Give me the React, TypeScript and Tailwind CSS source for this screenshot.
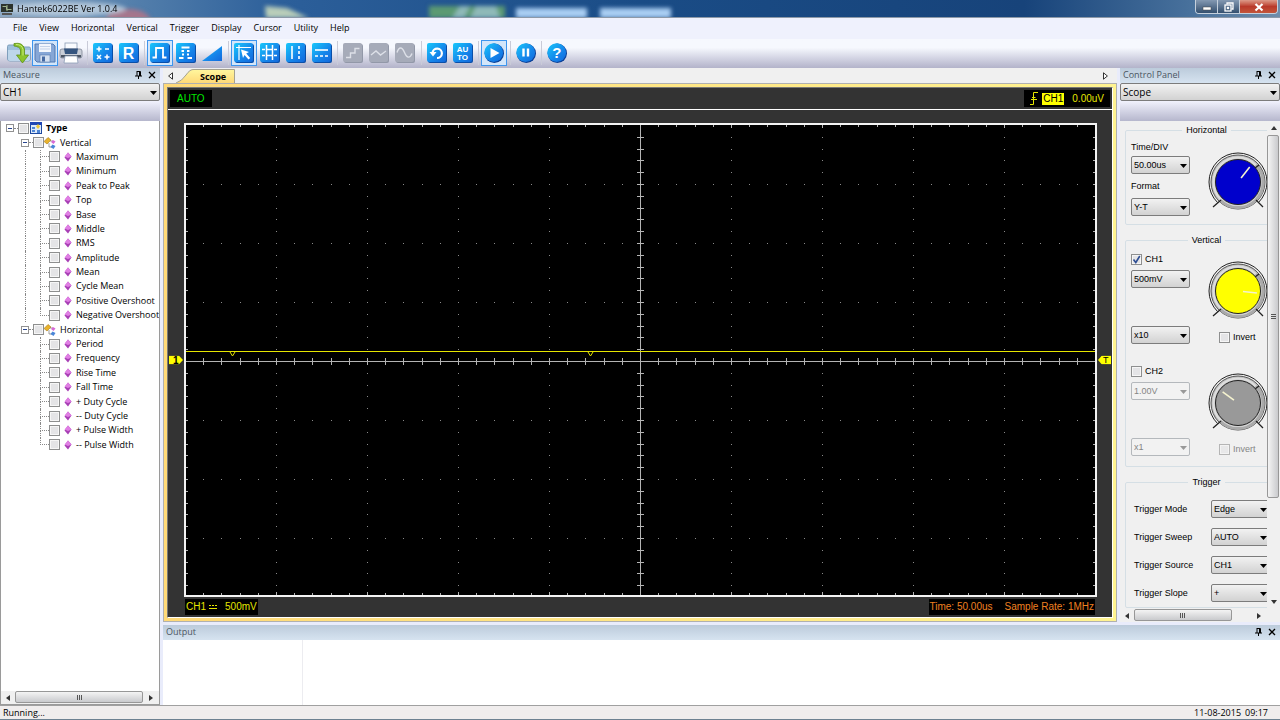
import { useState } from "react";
import type { ReactNode } from "react";
import clsx from "clsx";

const MENUS = ["File", "View", "Horizontal", "Vertical", "Trigger", "Display", "Cursor", "Utility", "Help"];

const VERTICAL_ITEMS = [
  "Maximum",
  "Minimum",
  "Peak to Peak",
  "Top",
  "Base",
  "Middle",
  "RMS",
  "Amplitude",
  "Mean",
  "Cycle Mean",
  "Positive Overshoot",
  "Negative Overshoot",
];

const HORIZONTAL_ITEMS = [
  "Period",
  "Frequency",
  "Rise Time",
  "Fall Time",
  "+ Duty Cycle",
  "-- Duty Cycle",
  "+ Pulse Width",
  "-- Pulse Width",
];

const TRIGGER_ROWS = [
  { label: "Trigger Mode", value: "Edge" },
  { label: "Trigger Sweep", value: "AUTO" },
  { label: "Trigger Source", value: "CH1" },
  { label: "Trigger Slope", value: "+" },
];

/* ---------- toolbar ---------- */

function Tile({ children, off }: { children: ReactNode; off?: boolean }) {
  return (
    <svg viewBox="0 0 20 20" className="h-5 w-5" fill="none">
      <rect x="1" y="1" width="19" height="19" rx="2" fill={off ? "#9298a8" : "#0a4fa8"} />
      <rect width="19" height="19" rx="2" fill={off ? "#a6abb9" : "url(#tile)"} />
      {children}
    </svg>
  );
}

function Disc({ children }: { children: ReactNode }) {
  return (
    <svg viewBox="0 0 20 20" className="h-5 w-5" fill="none">
      <circle cx="10.3" cy="10.3" r="9.7" fill="#0a3f96" />
      <circle cx="9.7" cy="9.7" r="9.4" fill="url(#tile)" />
      {children}
    </svg>
  );
}

type Tool = { name: string; active?: boolean; off?: boolean; icon: ReactNode };

const TOOL_GROUPS: Tool[][] = [
  [
    {
      name: "Open",
      icon: (
        <svg viewBox="0 0 26 22" className="h-[22px] w-[26px]" fill="none">
          <path d="M1.500 4.500Q1.500 3 3 3h6l2 2h12q1.500 0 1.500 1.500V17q0 2-2 2H4q-2.500 0-2.500-2z" fill="#9fc0dc" stroke="#7f9fbc" />
          <path d="M2 8h22v9q0 2-2 2H4q-2 0-2-2z" fill="#bdd6ea" />
          <path d="M8 1.500q9-1.500 10.500 5.500v6h4L16.500 21 10.500 13h4V8q-.5-3.500-6.500-4z" fill="#8cc52c" stroke="#5d8f17" strokeWidth=".8" />
          <path d="M10 2.500q6 0 7 5v6" stroke="#c8ec7c" />
        </svg>
      ),
    },
    {
      name: "Save",
      active: true,
      icon: (
        <svg viewBox="0 0 22 22" className="h-[22px] w-[22px]" fill="none">
          <path d="M1 2h18l2 2v16H3l-2-2z" fill="#86a7d6" stroke="#5378b0" />
          <rect x="5" y="2" width="12" height="8" fill="#f2f6fc" />
          <path d="M6 4.500h10M6 7h10" stroke="#c3d2e8" />
          <rect x="6" y="13" width="10" height="7" fill="#d4e0f0" stroke="#5378b0" strokeWidth=".6" />
          <rect x="8" y="14.500" width="3" height="5" fill="#456aa3" />
        </svg>
      ),
    },
    {
      name: "Print",
      icon: (
        <svg viewBox="0 0 24 22" className="h-[22px] w-6" fill="none">
          <rect x="6" y="1" width="12" height="8" fill="#fafcff" stroke="#8b9cb5" strokeWidth=".8" />
          <rect x="1" y="7" width="22" height="9" rx="2" fill="#c9ced7" stroke="#7d8796" strokeWidth=".8" />
          <path d="M5 6.500h14l-1 5.500H6z" fill="#35557f" />
          <rect x="2" y="13" width="20" height="2.500" fill="#4c5666" />
          <path d="M6 14h12l1 7H5z" fill="#fff" stroke="#8b9cb5" strokeWidth=".8" />
        </svg>
      ),
    },
  ],
  [
    {
      name: "Math",
      icon: (
        <Tile>
          <path d="M3.500 6h5M6 3.500v5M12 6h4M4 12l4 4M8 12l-4 4M11.500 14h5M14 11.500v5" stroke="#fff" strokeWidth="1.500" />
        </Tile>
      ),
    },
    {
      name: "Reference",
      icon: (
        <Tile>
          <text x="9.500" y="15.500" textAnchor="middle" fontSize="16" fontWeight="700" fill="#fff" fontFamily="Liberation Sans, sans-serif">R</text>
        </Tile>
      ),
    },
  ],
  [
    {
      name: "Channel 1",
      active: true,
      icon: (
        <Tile>
          <path d="M2.500 14.500H6V5h7v9.500h3.500" stroke="#fff" strokeWidth="1.800" />
        </Tile>
      ),
    },
    {
      name: "Channel 2",
      icon: (
        <Tile>
          <path d="M3 15h4.500M11.500 15H16M5.500 4.500h8M5.500 8h2.500M11 8h2.500M6 11.500h2M11 11.500h2" stroke="#fff" strokeWidth="1.800" />
        </Tile>
      ),
    },
    {
      name: "Ramp",
      icon: (
        <svg viewBox="0 0 20 20" className="h-5 w-5">
          <path d="M0 18 20 3v15z" fill="url(#tile)" />
        </svg>
      ),
    },
  ],
  [
    {
      name: "Cursor cross",
      active: true,
      icon: (
        <Tile>
          <path d="M2 4.500h15M5 2v15" stroke="#fff" strokeWidth="1.200" />
          <path d="M7 6.500l8 2.500-2.800 1.500 4 4.500-1.700 1.500-4-4.500L9 15z" fill="#fff" />
        </Tile>
      ),
    },
    {
      name: "Cursor trace",
      icon: (
        <Tile>
          <path d="M2 6.500h3M6 6.500h7M14 6.500h3M2 12.500h3M6 12.500h7M14 12.500h3M6.500 2v15M12.500 2v15" stroke="#fff" strokeWidth="1.500" />
        </Tile>
      ),
    },
    {
      name: "Cursor vertical",
      icon: (
        <Tile>
          <path d="M6 3v13" stroke="#fff" strokeWidth="1.600" />
          <path d="M13 3v13" stroke="#fff" strokeWidth="1.600" strokeDasharray="3 2" />
        </Tile>
      ),
    },
    {
      name: "Cursor horizontal",
      icon: (
        <Tile>
          <path d="M3 7h13" stroke="#fff" strokeWidth="1.600" />
          <path d="M3 13h13" stroke="#fff" strokeWidth="1.600" strokeDasharray="3 2" />
        </Tile>
      ),
    },
  ],
  [
    {
      name: "Step",
      off: true,
      icon: (
        <Tile off>
          <path d="M3 14.500h4.500V10H12V5.500h4.500" stroke="#dde0e8" strokeWidth="1.400" />
        </Tile>
      ),
    },
    {
      name: "Linear",
      off: true,
      icon: (
        <Tile off>
          <path d="M2 12l5-4 4.500 4L17 8" stroke="#dde0e8" strokeWidth="1.400" />
        </Tile>
      ),
    },
    {
      name: "Sine",
      off: true,
      icon: (
        <Tile off>
          <path d="M2 9.500c2-6 5-6 7.500 0s5.500 6 7.500 1" stroke="#dde0e8" strokeWidth="1.400" />
        </Tile>
      ),
    },
  ],
  [
    {
      name: "Reset",
      icon: (
        <Tile>
          <path d="M5.500 10a4.700 4.700 0 1 1 4.500 5" stroke="#fff" strokeWidth="2.200" />
          <path d="M2.500 9h7L6 13.500z" fill="#fff" />
        </Tile>
      ),
    },
    {
      name: "Auto set",
      icon: (
        <Tile>
          <g fill="#fff" fontSize="8" fontWeight="700" textAnchor="middle" fontFamily="Liberation Sans, sans-serif">
            <text x="9.500" y="9">AU</text>
            <text x="9.500" y="17">TO</text>
          </g>
        </Tile>
      ),
    },
  ],
  [
    {
      name: "Run",
      active: true,
      icon: (
        <Disc>
          <path d="M6.500 5v10l9-5z" fill="#fff" />
        </Disc>
      ),
    },
  ],
  [
    {
      name: "Pause",
      icon: (
        <Disc>
          <path d="M7.500 5.500v8M12 5.500v8" stroke="#fff" strokeWidth="2.400" />
        </Disc>
      ),
    },
  ],
  [
    {
      name: "Help",
      icon: (
        <Disc>
          <text x="9.800" y="15" textAnchor="middle" fontSize="15" fontWeight="700" fill="#fff" fontFamily="Liberation Sans, sans-serif">?</text>
        </Disc>
      ),
    },
  ],
];

function Toolbar() {
  return (
    <div className="flex h-[29px] shrink-0 items-center bg-linear-to-b from-[#f6f8fe] from-30% to-[#b3b3ca] pb-0.5 pl-[6px]">
      {TOOL_GROUPS.map((group, i) => (
        <div key={i} className="flex items-center">
          {i > 0 && (
            <span className={clsx("flex justify-center", i % 2 ? "w-[6px]" : "w-[5px]")}>
              <span className="h-6 w-px bg-[#c9cbd8]" />
            </span>
          )}
          {group.map((t) => (
            <button
              key={t.name}
              aria-label={t.name}
              disabled={t.off}
              className={clsx(
                "flex h-[26px] w-[26px] items-center justify-center",
                t.active && "border border-[#3d95ee] bg-[#d3e6fa]",
              )}
            >
              {t.icon}
            </button>
          ))}
        </div>
      ))}
    </div>
  );
}

/* ---------- title bar ---------- */

function TitleBar() {
  return (
    <header className="relative flex h-[17px] shrink-0 items-center overflow-hidden bg-[#1d4f88]">
      <svg viewBox="0 0 1280 17" preserveAspectRatio="none" className="absolute inset-0 h-full w-full">
        <rect width="1280" height="17" fill="url(#sky)" />
        <g filter="url(#soft)">
          <ellipse cx="128" cy="20" rx="22" ry="11" fill="#a5768c" />
          <ellipse cx="66" cy="9" rx="60" ry="7" fill="#c3d3e2" opacity=".8" />
          <path d="M265 6l22 2 22 10h-43z" fill="#b9cdb9" />
          <path d="M429 6h76v12h-76z" fill="#5b9a72" />
          <path d="M452 18l8-12h10l-6 12zM476 6h20l4 12h-30z" fill="#8fb9b8" />
          <path d="M516 8h71v10h-71zM600 8h71v10h-71z" fill="#a9cdf2" />
        </g>
      </svg>
      <svg viewBox="0 0 12 12" className="relative ml-px h-3 w-3">
        <rect y="1" width="12" height="8" fill="#2c332c" />
        <path d="M1.500 3.500h4v3h5M6 2v6" stroke="#a0b58c" fill="none" />
        <path d="M1 11h10" stroke="#555" strokeWidth="2" />
      </svg>
      <h1 className="relative ml-1 flex-1 text-[9px] leading-4 text-black">Hantek6022BE Ver 1.0.4</h1>
      <div className="relative mr-0.5 flex h-[14px] self-start overflow-hidden rounded-b border border-t-0 border-[#c5d0dc]">
        <button aria-label="Minimize" className="flex w-[22px] items-center justify-center border-r border-[#c5d0dc] bg-linear-to-b from-[#8499b2] to-[#34506f]">
          <svg viewBox="0 0 10 10" className="h-[10px] w-[10px]"><rect x="1" y="5" width="8" height="3" fill="#fff" stroke="#444" strokeWidth=".5" /></svg>
        </button>
        <button aria-label="Restore" className="flex w-[22px] items-center justify-center border-r border-[#c5d0dc] bg-linear-to-b from-[#8499b2] to-[#34506f]">
          <svg viewBox="0 0 10 10" className="h-[10px] w-[10px]" fill="none" stroke="#fff" strokeWidth="1.300">
            <path d="M3 2.500V1h6v6H7.500" />
            <rect x="1" y="3" width="6" height="6" />
            <rect x="3.500" y="5.500" width="1" height="1" />
          </svg>
        </button>
        <button aria-label="Close" className="flex w-[37px] items-center justify-center bg-linear-to-b from-[#dc9a8a] via-[#b9392a] to-[#c3553a]">
          <svg viewBox="0 0 10 10" className="h-[10px] w-[10px]"><path d="M1.500 2l7 6.500M8.500 2l-7 6.500" stroke="#fff" strokeWidth="2.200" /></svg>
        </button>
      </div>
    </header>
  );
}

/* ---------- shared bits ---------- */

function PanelHeader({ title }: { title: string }) {
  return (
    <div className="flex h-[15px] shrink-0 items-center bg-linear-to-b from-[#bccbdb] to-[#d6e3f0] pr-1 pb-px pl-[3px]">
      <h2 className="flex-1 text-[9px] leading-3 text-[#4a5561]">{title}</h2>
      <button aria-label={`Pin ${title}`} className="mr-1.5">
        <svg viewBox="0 0 7 8" className="h-2 w-[7px]" fill="none" stroke="#000">
          <path d="M2 .5h3.500V5M2 0v5M0 5h7M3.500 5v3M4.500 0v5" />
        </svg>
      </button>
      <button aria-label={`Close ${title}`}>
        <svg viewBox="0 0 8 8" className="h-2 w-2"><path d="M1 1l6 6M7 1L1 7" stroke="#000" strokeWidth="1.300" /></svg>
      </button>
    </div>
  );
}

function Combo({ label, value, disabled, className }: { label: string; value: string; disabled?: boolean; className?: string }) {
  return (
    <div className={clsx("relative h-[18px]", className)}>
      <select
        aria-label={label}
        disabled={disabled}
        defaultValue={value}
        className={clsx(
          "h-full w-full appearance-none rounded-xs border pr-3 pl-0.5 leading-3",
          disabled
            ? "border-[#b4b8bc] bg-[#f2f2f2] text-[#858585]"
            : "border-[#7c7c7c] bg-linear-to-b from-[#f2f2f2] to-[#d2d2d2] text-black",
        )}
      >
        <option>{value}</option>
      </select>
      <svg viewBox="0 0 7 4" className={clsx("pointer-events-none absolute top-[8px] right-[3px] h-1 w-[7px]", disabled ? "fill-[#999]" : "fill-black")}>
        <path d="M0 0h7L3.500 4z" />
      </svg>
    </div>
  );
}

const CHECKBOX =
  "h-[11px] w-[11px] shrink-0 appearance-none border border-[#8e8f8f] bg-[#e4e4e6] bg-clip-padding shadow-[inset_0_0_0_1px_#f6f6f6]";

function Check({ label, checked, disabled }: { label: string; checked?: boolean; disabled?: boolean }) {
  const [on, setOn] = useState(!!checked);
  return (
    <label className={clsx("flex h-3 items-center gap-[3px] leading-3", disabled && "text-[#858585]")}>
      <span className="relative flex">
        <input type="checkbox" checked={on} disabled={disabled} onChange={() => setOn(!on)} className={clsx(CHECKBOX, disabled && "opacity-60")} />
        {on && (
          <svg viewBox="0 0 11 11" className="pointer-events-none absolute inset-0 h-[11px] w-[11px]">
            <path d="M2.500 5.500l2.300 3 4-6.500" stroke="#2f4f94" strokeWidth="1.600" fill="none" />
          </svg>
        )}
      </span>
      {label}
    </label>
  );
}

function HScroll({ thumb }: { thumb: string }) {
  return (
    <div className="flex h-[13px] shrink-0 items-center bg-[#f0f0f0]">
      <button aria-label="Scroll left" className="flex w-[14px] justify-center">
        <svg viewBox="0 0 4 6" className="h-1.5 w-1"><path d="M4 0v6L0 3z" fill="#333" /></svg>
      </button>
      <div className="h-full flex-1">
        <div className={clsx("flex h-3 items-center justify-center gap-px rounded-xs border border-[#979797] bg-linear-to-b from-[#f4f4f4] to-[#c9cacd]", thumb)}>
          <i className="h-[5px] w-px bg-[#555]" />
          <i className="h-[5px] w-px bg-[#555]" />
          <i className="h-[5px] w-px bg-[#555]" />
        </div>
      </div>
      <button aria-label="Scroll right" className="flex w-4 justify-center">
        <svg viewBox="0 0 4 6" className="h-1.5 w-1"><path d="M0 0v6l4-3z" fill="#333" /></svg>
      </button>
    </div>
  );
}

/* ---------- measure panel ---------- */

function Expander() {
  return (
    <button aria-label="Collapse" className="flex h-2 w-2 shrink-0 items-center justify-center border border-[#919191] bg-white">
      <i className="h-px w-1 bg-[#28458f]" />
    </button>
  );
}

function ClassIcon() {
  return (
    <svg viewBox="0 0 12 12" className="h-3 w-3 shrink-0">
      <path d="M0 4.500L4 .5l3 2.500-4 4z" fill="#e9b32c" stroke="#a87a14" strokeWidth=".6" />
      <path d="M6 4h3M5 6v4h3" stroke="#777" fill="none" strokeWidth=".7" />
      <path d="M7 5l2-2 2.500 1.500-2 2.500z" fill="#d769d6" />
      <path d="M6.500 10l2-2.500 3 1.500-2 3z" fill="#4a86d8" />
    </svg>
  );
}

function Leaf({ label, trunk, last }: { label: string; trunk?: boolean; last?: boolean }) {
  return (
    <li>
      <label className="flex h-full items-center pl-6">
        <span className={clsx("h-full w-[15px] border-l border-dotted", trunk ? "border-[#888]" : "border-transparent")} />
        <span className="flex h-full w-[9px] flex-col">
          <span className="flex-1 border-b border-l border-dotted border-[#888]" />
          <span className={clsx("flex-1 border-l border-dotted", last ? "border-transparent" : "border-[#888]")} />
        </span>
        <input type="checkbox" className={CHECKBOX} />
        <svg viewBox="0 0 8 10" className="mr-1 ml-1 h-[10px] w-2 shrink-0">
          <path d="M4 .5l3.500 4L4 9.500.5 5.500z" fill="#a83fb5" />
          <path d="M4 .5l3.500 4L4 6 .5 4.500z" fill="#e07fe4" />
        </svg>
        {label}
      </label>
    </li>
  );
}

function Branch({ label }: { label: string }) {
  return (
    <li className="flex items-center pl-5">
      <Expander />
      <span className="w-[4px] border-t border-dotted border-[#888]" />
      <label className="flex items-center">
        <input type="checkbox" className={CHECKBOX} />
        <ClassIcon />
        <span className="ml-1">{label}</span>
      </label>
    </li>
  );
}

function MeasurePanel() {
  return (
    <aside className="flex w-[160px] shrink-0 flex-col">
      <PanelHeader title="Measure" />
      <Combo label="Measure channel" value="CH1" className="shrink-0 text-[10px]" />
      <div className="h-[20px] shrink-0 bg-linear-to-b from-[#f1f2fd] to-[#b6b7cd]" />
      <div className="flex min-h-0 flex-1 flex-col border border-t-0 border-[#9a9a9a] bg-white">
        <div className="min-h-0 flex-1 overflow-hidden">
          <ul className="grid h-[331px] auto-rows-fr text-[9px] leading-[14px] whitespace-nowrap">
            <li className="flex items-center pl-[5px]">
              <Expander />
              <span className="w-[4px] border-t border-dotted border-[#888]" />
              <label className="flex items-center font-bold">
                <input type="checkbox" className={CHECKBOX} />
                <svg viewBox="0 0 12 12" className="ml-px h-3 w-3">
                  <rect x=".5" y=".5" width="11" height="11" fill="#dce9fa" stroke="#1d49a0" />
                  <rect width="12" height="3" fill="#1f46b4" />
                  <path d="M2 5h3v2H2zM2 8h3v2H2zM7 8h3v3H7z" fill="#4f86d4" />
                  <path d="M8 2l2 2.500L8 7 6 4.500z" fill="#f0c93a" />
                </svg>
                <span className="ml-1">Type</span>
              </label>
            </li>
            <Branch label="Vertical" />
            {VERTICAL_ITEMS.map((v, i) => (
              <Leaf key={v} label={v} trunk last={i === VERTICAL_ITEMS.length - 1} />
            ))}
            <Branch label="Horizontal" />
            {HORIZONTAL_ITEMS.map((v, i) => (
              <Leaf key={v} label={v} last={i === HORIZONTAL_ITEMS.length - 1} />
            ))}
          </ul>
        </div>
        <HScroll thumb="w-full" />
      </div>
    </aside>
  );
}

/* ---------- scope ---------- */

const W = 909;
const H = 470;
const CX = 454;
const CY = 236;

function gridPaths() {
  let dots = "";
  let ticks = "";
  for (let k = -4; k <= 4; k++) {
    if (k === 0) continue;
    for (let j = -19; j <= 19; j++) dots += `M${CX + k * 91} ${Math.round(CY + j * 11.8)}.5h1`;
  }
  for (let k = -3; k <= 3; k++) {
    if (k === 0) continue;
    for (let j = -24; j <= 24; j++) dots += `M${Math.round(CX + j * 18.2)} ${CY + k * 59}.5h1`;
  }
  for (let j = -24; j <= 24; j++) {
    const x = Math.round(CX + j * 18.2);
    const edge = j % 5 === 0 ? 3 : 2;
    ticks += `M${x}.5 ${CY - 3}v7M${x}.5 0v${edge}M${x}.5 ${H}v-${edge}`;
  }
  for (let j = -19; j <= 19; j++) {
    const y = Math.round(CY + j * 11.8);
    ticks += `M${CX - 3} ${y}.5h7M0 ${y}.5h2M${W} ${y}.5h-2`;
  }
  return { dots, ticks };
}

function Graticule() {
  const { dots, ticks } = gridPaths();
  return (
    <svg viewBox={`0 0 ${W} ${H}`} preserveAspectRatio="none" className="block h-full w-full bg-black" fill="none" shapeRendering="crispEdges">
      <path d={dots} stroke="#8a8a8a" />
      <path d={ticks} stroke="#b4b4b4" />
      <path d={`M0 ${CY}.5H${W}M${CX}.5 0V${H}`} stroke="#b4b4b4" />
      <path d={`M0 226.5H${W}`} stroke="#e6e600" />
      <path d="M44 227l2.500 4 2.500-4M402 227l2.500 4 2.500-4" stroke="#e6e600" shapeRendering="auto" />
    </svg>
  );
}

function ScopeView() {
  return (
    <main className="flex min-w-0 flex-1 flex-col">
      <div className="flex h-[15px] shrink-0 items-end bg-[#f0f0f0] pr-[9px] pl-[5px]">
        <button aria-label="Previous tab" className="self-center">
          <svg viewBox="0 0 5 8" className="h-2 w-[5px]" fill="#fff" stroke="#000" strokeWidth=".8"><path d="M4.500 .8v6.400L.6 4z" /></svg>
        </button>
        <button className="relative h-[14px] w-[62px] pl-[27px] text-left text-[9px] leading-[13px] font-bold text-black">
          <svg viewBox="0 0 62 14" preserveAspectRatio="none" className="absolute inset-0 h-full w-full">
            <path d="M3 14Q9 12 13 6T21 .5H61.500V14" fill="url(#tab)" stroke="#a5a18e" />
          </svg>
          <span className="relative">Scope</span>
        </button>
        <span className="flex-1" />
        <button aria-label="Next tab" className="self-center">
          <svg viewBox="0 0 5 8" className="h-2 w-[5px]" fill="#fff" stroke="#000" strokeWidth=".8"><path d="M.5 .8v6.400L4.400 4z" /></svg>
        </button>
      </div>
      <div className="flex min-h-0 flex-1 flex-col border border-[#b0b0b0] bg-linear-to-r from-[#ffd978] to-[#fff391] p-[3px]">
        <div className="flex min-h-0 flex-1 flex-col border border-t-[#777] border-r-white border-b-white border-l-[#777] bg-[#333] font-['Liberation_Sans',sans-serif] text-[10px] leading-4">
          <div className="flex h-[22px] shrink-0 items-center justify-between border-b border-white px-[2px]">
            <span className="bg-black px-[7px] leading-[17px] text-[#00e600]">AUTO</span>
            <span className="flex items-center bg-black px-[6px] leading-[17px] text-[#e6e600]">
              <svg viewBox="0 0 8 13" className="mr-1 h-[13px] w-2" fill="none" stroke="#e6e600"><path d="M0 12.500h3.500V.5H8M1 7.500h6M2 5.500h3.500" /></svg>
              <span className="mr-2 bg-[#ffff00] px-px leading-3 text-black">CH1</span>
              0.00uV
            </span>
          </div>
          <div className="relative mt-[13px] min-h-0 flex-1 pr-[15px] pl-4">
            <div className="h-full border-2 border-[#f4f4f4]">
              <Graticule />
            </div>
            <span className="absolute top-1/2 left-px flex h-[9px] w-[14px] -translate-y-1/2 items-center bg-[#ffff00] pl-1 text-[10px] leading-[9px] font-bold text-black [clip-path:polygon(0_0,70%_0,100%_50%,70%_100%,0_100%)]">
              1
            </span>
            <span className="absolute top-1/2 right-px flex h-[9px] w-[13px] -translate-y-1/2 items-center bg-[#ffff00] pl-[5px] text-[9px] leading-[9px] text-black [clip-path:polygon(30%_0,100%_0,100%_100%,30%_100%,0_50%)]">
              T
            </span>
          </div>
          <div className="flex h-[20px] shrink-0 items-center justify-between px-[17px]">
            <span className="flex items-center bg-black px-px text-[#e6e600]">
              CH1
              <svg viewBox="0 0 8 6" className="mr-2 ml-[3px] h-1.5 w-2" stroke="#e6e600"><path d="M0 1.500h8" strokeDasharray="2 1" /><path d="M0 4.500h8" /></svg>
              500mV
            </span>
            <span className="flex gap-3 bg-black px-px text-[#f08020]">
              <span>Time: 50.00us</span>
              <span>Sample Rate: 1MHz</span>
            </span>
          </div>
        </div>
      </div>
    </main>
  );
}

/* ---------- control panel ---------- */

function Knob({ color, angle }: { color: string; angle: number }) {
  return (
    <svg viewBox="0 0 62 62" className="h-[62px] w-[62px] shrink-0" fill="none">
      <circle cx="31" cy="31" r="27" fill="#c2c2c2" stroke="#555" />
      <circle cx="31" cy="31" r="24.500" stroke="#dedede" strokeWidth="2" />
      <path d="M49 14a25 25 0 0 1-36 35" stroke="#aaa" strokeWidth="3" />
      <path d="M10.500 51.500a29 29 0 1 1 41 0" stroke="#222" />
      <path d="M6 56l8-7M56 56l-7-7M48 17l4-3" stroke="#222" strokeWidth="1.300" />
      <circle cx="31" cy="31" r="22.500" fill={color} stroke="#222" />
      <path d="M36 31h14" stroke="#f5f3cf" strokeWidth="1.600" transform={`rotate(${angle} 31 31)`} />
    </svg>
  );
}

function Channel({ name, volts, probe, color, angle, on }: { name: string; volts: string; probe: string; color: string; angle: number; on?: boolean }) {
  return (
    <div className="flex">
      <div className="w-[59px] shrink-0">
        <Check label={name} checked={on} />
        <Combo label={`${name} volts`} value={volts} disabled={!on} className="mt-[5px]" />
        <Combo label={`${name} probe`} value={probe} disabled={!on} className="mt-[38px]" />
      </div>
      <div className="mt-[7px] ml-[17px] shrink-0">
        <Knob color={color} angle={angle} />
        <div className="mt-[9px] ml-3">
          <Check label="Invert" disabled={!on} />
        </div>
      </div>
    </div>
  );
}

function Group({ title, children }: { title: string; children: ReactNode }) {
  return (
    <fieldset className="ml-[5px] w-[163px] rounded-xs border border-[#d5dfe5] px-[5px]">
      <legend className="mx-auto h-3 px-1 leading-3">{title}</legend>
      {children}
    </fieldset>
  );
}

function ControlPanel() {
  return (
    <aside className="ml-[3px] flex w-[160px] shrink-0 flex-col">
      <PanelHeader title="Control Panel" />
      <Combo label="Control panel page" value="Scope" className="shrink-0 text-[10px]" />
      <div className="h-[20px] shrink-0 bg-linear-to-b from-[#f1f2fd] to-[#b6b7cd]" />
      <div className="flex min-h-0 flex-1 bg-[#f0f0f0]">
        <div className="flex min-w-0 flex-1 flex-col gap-[9px] overflow-hidden pt-[3px] font-['Liberation_Sans',sans-serif] text-[9px] leading-3">
          <Group title="Horizontal">
            <div className="flex pt-[5px] pb-2">
              <div className="w-[59px] shrink-0">
                <p>Time/DIV</p>
                <Combo label="Time/DIV" value="50.00us" className="mt-[3px]" />
                <p className="mt-1.5">Format</p>
                <Combo label="Format" value="Y-T" className="mt-1.5" />
              </div>
              <div className="mt-[10px] ml-[17px]">
                <Knob color="#0000cc" angle={-52} />
              </div>
            </div>
          </Group>
          <Group title="Vertical">
            <div className="flex flex-col gap-[21px] pt-[7px] pb-[10px]">
              <Channel name="CH1" volts="500mV" probe="x10" color="#ffff00" angle={6} on />
              <Channel name="CH2" volts="1.00V" probe="x1" color="#999999" angle={-144} />
            </div>
          </Group>
          <Group title="Trigger">
            <div className="pt-[7px] pl-[3px]">
              {TRIGGER_ROWS.map((r) => (
                <div key={r.label} className="flex h-7 items-center">
                  <span className="w-[77px] shrink-0">{r.label}</span>
                  <Combo label={r.label} value={r.value} className="w-[59px] shrink-0" />
                </div>
              ))}
            </div>
          </Group>
        </div>
        <div className="flex w-[13px] shrink-0 flex-col items-center">
          <button aria-label="Scroll up" className="flex h-[14px] items-center">
            <svg viewBox="0 0 6 4" className="h-1 w-1.5"><path d="M0 4h6L3 0z" fill="#333" /></svg>
          </button>
          <div className="w-full flex-1">
            <div className="flex h-[79%] w-3 flex-col items-center justify-center gap-px rounded-xs border border-[#979797] bg-linear-to-r from-[#f4f4f4] to-[#c9cacd]">
              <i className="h-px w-[5px] bg-[#555]" />
              <i className="h-px w-[5px] bg-[#555]" />
              <i className="h-px w-[5px] bg-[#555]" />
            </div>
          </div>
          <button aria-label="Scroll down" className="flex h-[14px] items-center">
            <svg viewBox="0 0 6 4" className="h-1 w-1.5"><path d="M0 0h6L3 4z" fill="#333" /></svg>
          </button>
        </div>
      </div>
      <div className="shrink-0 bg-[#f0f0f0] pr-[13px]">
        <HScroll thumb="w-5/6" />
      </div>
    </aside>
  );
}

export default function App() {
  return (
    <div className="flex h-screen flex-col overflow-hidden bg-[#e9ecfb] font-['Open_Sans','Noto_Sans',sans-serif] text-black">
      <svg className="absolute h-0 w-0">
        <defs>
          <linearGradient id="tile" x1="0" y1="0" x2="1" y2="1">
            <stop offset="0" stopColor="#19c8fb" />
            <stop offset=".6" stopColor="#1585ea" />
            <stop offset="1" stopColor="#1268dc" />
          </linearGradient>
          <linearGradient id="tab" x1="0" y1="0" x2="0" y2="1">
            <stop offset="0" stopColor="#fff79e" />
            <stop offset="1" stopColor="#ffd978" />
          </linearGradient>
          <linearGradient id="sky">
            <stop offset="0" stopColor="#8ea9c4" />
            <stop offset=".1" stopColor="#5580ac" />
            <stop offset=".22" stopColor="#2c5f9a" />
            <stop offset=".5" stopColor="#1a4c86" />
            <stop offset=".8" stopColor="#17437a" />
            <stop offset=".93" stopColor="#48719c" />
            <stop offset="1" stopColor="#6f8dab" />
          </linearGradient>
          <filter id="soft">
            <feGaussianBlur stdDeviation="2" />
          </filter>
        </defs>
      </svg>
      <TitleBar />
      <nav className="flex h-[22px] shrink-0 items-center gap-[12px] border-t border-[#8d99a8] bg-[#eff1fd] pb-px pl-[13px] text-[9px] leading-3">
        {MENUS.map((m) => (
          <button key={m}>{m}</button>
        ))}
      </nav>
      <Toolbar />
      <div className="flex min-h-0 flex-1">
        <MeasurePanel />
        <div className="ml-[3px] flex min-w-0 flex-1 flex-col">
          <div className="flex min-h-0 flex-1">
            <ScopeView />
            <ControlPanel />
          </div>
          <section className="mt-[3px] flex h-[80px] shrink-0 flex-col">
            <PanelHeader title="Output" />
            <div className="flex-1 bg-white">
              <div className="h-full w-[140px] border-r border-[#ececf0]" />
            </div>
          </section>
        </div>
      </div>
      <footer className="flex h-[15px] shrink-0 items-center justify-between border-t border-b border-t-[#a0a0a0] border-b-[#6d8191] bg-[#f0eded] pr-3 pl-[3px] text-[9px] leading-3">
        <span>Running...</span>
        <span className="flex gap-1">
          <span>11-08-2015</span>
          <span>09:17</span>
        </span>
      </footer>
    </div>
  );
}
